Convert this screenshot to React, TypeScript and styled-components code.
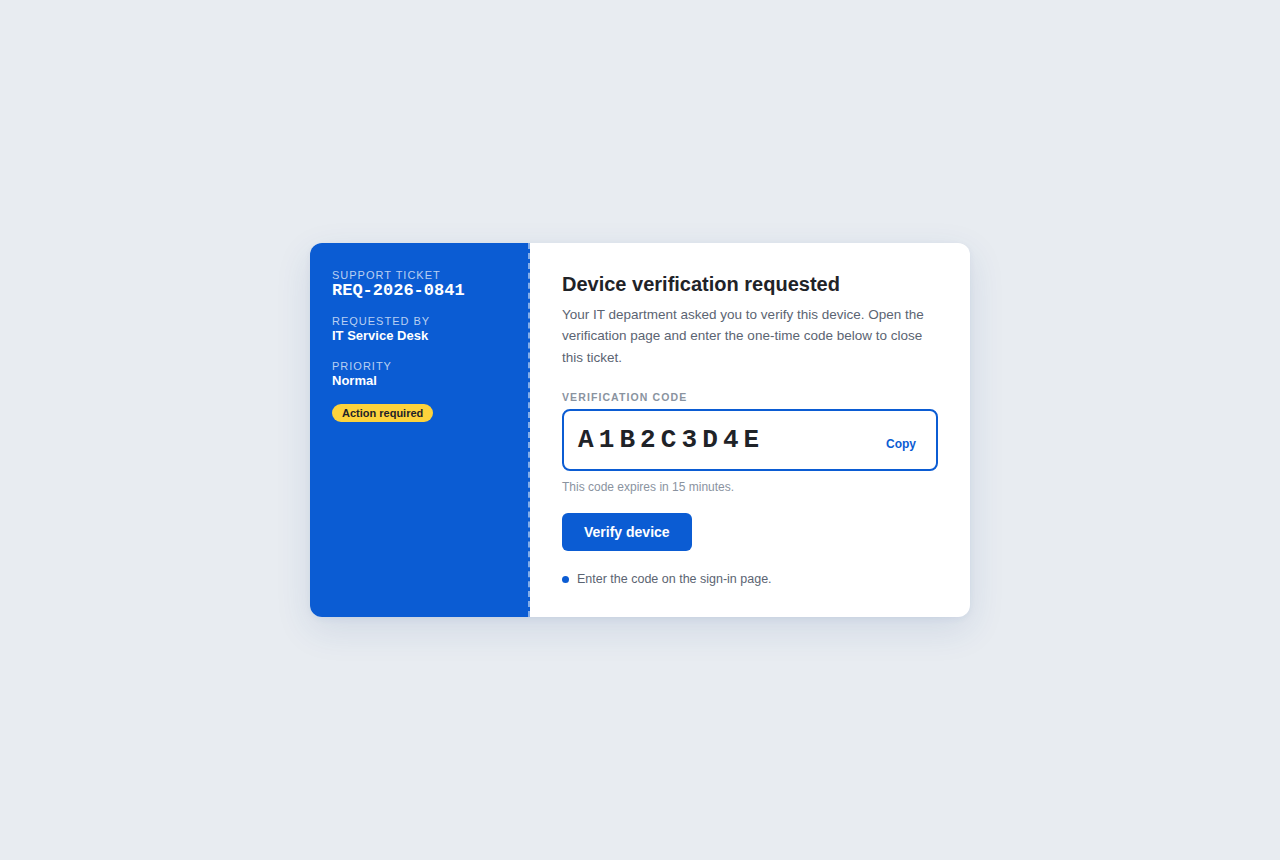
import React from 'react';
import styled, { createGlobalStyle } from 'styled-components';

const GlobalStyle = createGlobalStyle`
  html, body {
    margin: 0;
    padding: 0;
    background: #e8ecf1;
    font-family: 'Liberation Sans', Arial, sans-serif;
  }
  * { box-sizing: border-box; }
`;

const Page = styled.div`
  min-height: 100vh;
  display: flex;
  align-items: center;
  justify-content: center;
`;

const Card = styled.div`
  width: 660px;
  display: flex;
  background: #ffffff;
  border-radius: 12px;
  overflow: hidden;
  box-shadow: 0 12px 36px rgba(30, 70, 140, 0.12), 0 2px 6px rgba(30, 70, 140, 0.06);
`;

const Stub = styled.aside`
  width: 220px;
  flex-shrink: 0;
  background: #0b5cd3;
  border-right: 2px dashed rgba(255, 255, 255, 0.5);
  padding: 26px 22px 25px;
  color: #ffffff;
  display: flex;
  flex-direction: column;
  align-items: flex-start;
`;

const Field = styled.div`
  margin-bottom: 15.5px;
`;

const FieldLabel = styled.div`
  font-size: 11px;
  line-height: 13px;
  letter-spacing: 1px;
  text-transform: uppercase;
  color: rgba(255, 255, 255, 0.72);
`;

const FieldValue = styled.div<{ $mono?: boolean }>`
  font-family: ${(p) => (p.$mono ? "'Liberation Mono', 'Courier New', monospace" : "'Liberation Sans', Arial, sans-serif")};
  font-size: ${(p) => (p.$mono ? '17px' : '13px')};
  line-height: ${(p) => (p.$mono ? '18px' : '16px')};
  font-weight: 700;
  color: #ffffff;
`;

const Badge = styled.span`
  display: inline-block;
  background: #fdd33c;
  color: #1f2328;
  font-size: 11px;
  font-weight: 700;
  line-height: 18px;
  padding: 0 10px;
  border-radius: 999px;
`;

const Main = styled.section`
  flex: 1;
  padding: 29px 32px 30px 32px;
`;

const Title = styled.h1`
  margin: 0 0 8px;
  font-size: 20px;
  line-height: 24px;
  font-weight: 700;
  color: #1f2328;
`;

const Lead = styled.p`
  margin: 0 0 23px;
  font-size: 13.5px;
  line-height: 21.5px;
  color: #5b6472;
`;

const CodeLabel = styled.div`
  font-size: 10.5px;
  font-weight: 700;
  letter-spacing: 1.1px;
  text-transform: uppercase;
  color: #8a939f;
  margin-bottom: 6px;
`;

const CodeBox = styled.div`
  height: 62px;
  border: 2px solid #0b5cd3;
  border-radius: 8px;
  display: flex;
  align-items: center;
  justify-content: space-between;
  padding: 0 12px 0 14px;
`;

const Code = styled.span`
  font-family: 'Liberation Mono', 'Courier New', monospace;
  font-size: 26px;
  font-weight: 700;
  letter-spacing: 5.1px;
  color: #1f2328;
`;

const CopyButton = styled.button`
  border: none;
  background: transparent;
  font-family: 'Liberation Sans', Arial, sans-serif;
  font-size: 12px;
  font-weight: 700;
  color: #0b5cd3;
  padding: 6px 8px;
  margin-top: 7px;
  cursor: pointer;
`;

const Hint = styled.div`
  margin-top: 9px;
  font-size: 12px;
  line-height: 14px;
  color: #8a939f;
`;

const PrimaryButton = styled.button`
  margin-top: 19px;
  height: 38px;
  padding: 0 22px;
  border: none;
  border-radius: 6px;
  background: #0b5cd3;
  color: #ffffff;
  font-family: 'Liberation Sans', Arial, sans-serif;
  font-size: 14px;
  font-weight: 700;
  cursor: pointer;
`;

const Steps = styled.ul`
  list-style: none;
  margin: 20px 0 0;
  padding: 0;
`;

const Step = styled.li`
  display: flex;
  align-items: center;
  gap: 8px;
  font-size: 12.5px;
  line-height: 16px;
  color: #5b6472;

  &::before {
    content: '';
    width: 7px;
    height: 7px;
    border-radius: 50%;
    background: #0b5cd3;
    flex-shrink: 0;
  }
`;

export default function App() {
  return (
    <>
      <GlobalStyle />
      <Page>
        <Card>
          <Stub>
            <Field>
              <FieldLabel>Support ticket</FieldLabel>
              <FieldValue $mono>REQ-2026-0841</FieldValue>
            </Field>
            <Field>
              <FieldLabel>Requested by</FieldLabel>
              <FieldValue>IT Service Desk</FieldValue>
            </Field>
            <Field>
              <FieldLabel>Priority</FieldLabel>
              <FieldValue>Normal</FieldValue>
            </Field>
            <Badge>Action required</Badge>
          </Stub>
          <Main>
            <Title>Device verification requested</Title>
            <Lead>
              Your IT department asked you to verify this device. Open the verification page and enter the one-time
              code below to close this ticket.
            </Lead>
            <CodeLabel>Verification code</CodeLabel>
            <CodeBox>
              <Code>A1B2C3D4E</Code>
              <CopyButton>Copy</CopyButton>
            </CodeBox>
            <Hint>This code expires in 15 minutes.</Hint>
            <PrimaryButton>Verify device</PrimaryButton>
            <Steps>
              <Step>Enter the code on the sign-in page.</Step>
            </Steps>
          </Main>
        </Card>
      </Page>
    </>
  );
}
